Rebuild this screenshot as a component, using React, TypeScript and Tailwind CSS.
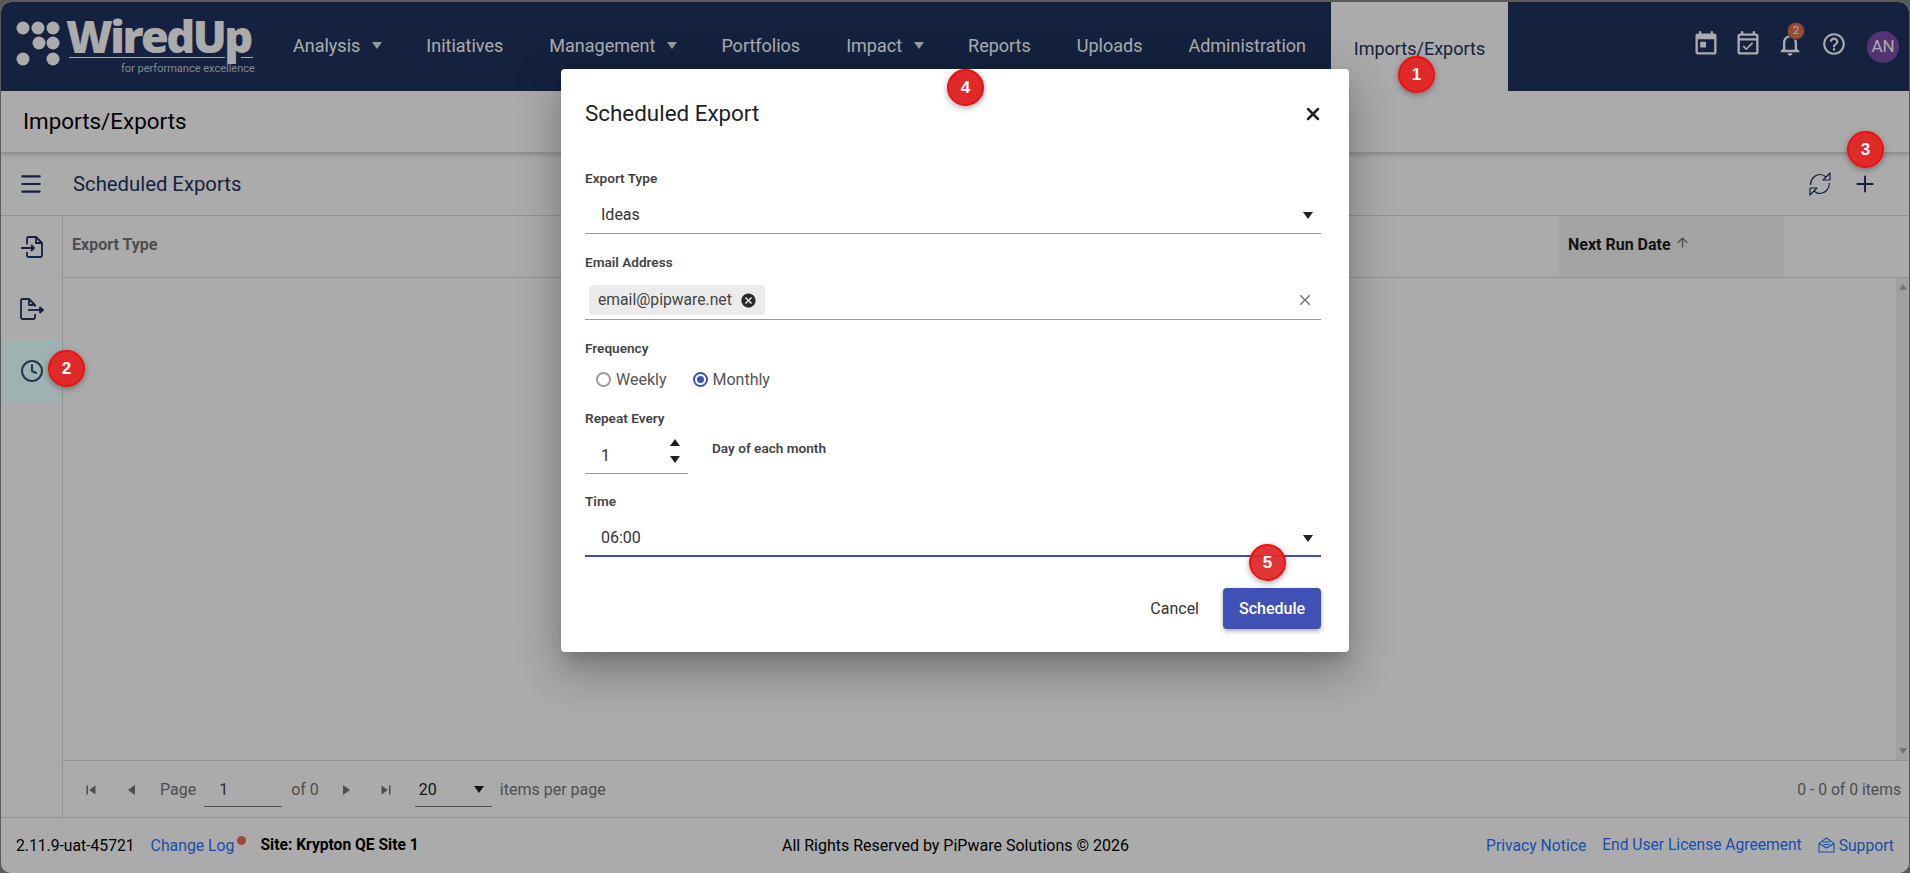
import { Clock, Menu, Plus, ArrowUp, X } from "lucide-react";
import {
  MdToday,
  MdOutlineEventAvailable,
  MdOutlineNotifications,
  MdHelpOutline,
  MdClose,
  MdCancel,
  MdSkipPrevious,
  MdSkipNext,
} from "react-icons/md";

const navItems = [
  { label: "Analysis", caret: true },
  { label: "Initiatives" },
  { label: "Management", caret: true },
  { label: "Portfolios" },
  { label: "Impact", caret: true },
  { label: "Reports" },
  { label: "Uploads" },
  { label: "Administration" },
];

function Tri({ dir = "down", className = "" }: { dir?: "down" | "up" | "left" | "right"; className?: string }) {
  const points = {
    down: "0,0 10,0 5,7",
    up: "0,7 10,7 5,0",
    left: "8,0 8,10 1,5",
    right: "1,0 1,10 8,5",
  }[dir];
  const box = dir === "left" || dir === "right" ? "0 0 9 10" : "0 0 10 7";
  return (
    <svg viewBox={box} className={className} fill="currentColor">
      <polygon points={points} />
    </svg>
  );
}

function ImportIcon() {
  return (
    <svg viewBox="0 0 24 24" className="size-[24px]" fill="none" stroke="currentColor" strokeWidth="1.8" strokeLinejoin="round">
      <path d="M7 9.5V3.5A1.5 1.5 0 0 1 8.5 2H16L22 8V20.5A1.5 1.5 0 0 1 20.5 22H8.5A1.5 1.5 0 0 1 7 20.5V17" />
      <path d="M16 2V8H22" />
      <path d="M1 13H14M11 10l3 3-3 3" />
    </svg>
  );
}

function ExportIcon() {
  return (
    <svg viewBox="0 0 24 24" className="size-[24px]" fill="none" stroke="currentColor" strokeWidth="1.8" strokeLinejoin="round">
      <path d="M15 9.5V8L9 2H2.5A1.5 1.5 0 0 0 1 3.5V20.5A1.5 1.5 0 0 0 2.5 22H13.5A1.5 1.5 0 0 0 15 20.5V17" />
      <path d="M9 2V8H15" />
      <path d="M8 13H20" />
      <path d="M20 10.5 23 13 20 15.5Z" fill="currentColor" />
    </svg>
  );
}

function SyncIcon() {
  return (
    <svg viewBox="0 0 24 24" className="size-[24px]" fill="none" stroke="currentColor" strokeWidth="1.2" strokeLinejoin="round">
      <path d="M2.5 13C2.5 7 7 2.5 12 2.5c2.5 0 4.5 1 6 2.5" />
      <path d="M22 1v7h-7z" />
      <path d="M21.5 11c0 6-4.5 10.5-9.5 10.5-2.5 0-4.5-1-6-2.5" />
      <path d="M2 23v-7h7z" />
    </svg>
  );
}

function Logo() {
  const dots = [
    [22, 28],
    [37, 28],
    [52, 28],
    [38, 43],
    [52, 43],
    [22, 59],
    [52, 59],
  ];
  return (
    <div className="relative w-[270px] h-full shrink-0">
      <svg className="absolute left-0 top-0" width="68" height="89" viewBox="0 0 68 89">
        {dots.map(([x, y]) => (
          <circle key={`${x}-${y}`} cx={x} cy={y - 2} r="6.5" fill="#ffffff" />
        ))}
      </svg>
      <span className="absolute left-[65px] top-[11px] text-[45px] leading-[46px] font-black text-white tracking-[-2.5px] [font-family:'Open_Sans',sans-serif]">
        WiredUp
      </span>
      <div className="absolute left-[68px] top-[55px] w-[156px] h-px bg-white" />
      <div className="absolute left-[240px] top-[55px] w-[12px] h-px bg-white" />
      <span className="absolute left-[120px] top-[59px] text-[11px] leading-[16px] text-[#c3c8d2]">
        for performance excellence
      </span>
    </div>
  );
}

function Field({ label, children }: { label: string; children: React.ReactNode }) {
  return (
    <div>
      <div className="h-5 flex items-center text-[13.6px] font-semibold text-[#444444]">{label}</div>
      {children}
    </div>
  );
}

function Radio({ label, checked = false }: { label: string; checked?: boolean }) {
  return (
    <div className="flex items-center gap-[5px]">
      <span
        className={
          checked
            ? "size-[15px] rounded-full border-2 border-[#3f51b5] flex items-center justify-center"
            : "size-[15px] rounded-full border-2 border-[#9a9a9a]"
        }
      >
        {checked && <span className="size-[7px] rounded-full bg-[#3f51b5]" />}
      </span>
      <span className="text-[16px] text-[#555555]">{label}</span>
    </div>
  );
}

function Badge({ n, className }: { n: number; className: string }) {
  return (
    <div
      className={
        "absolute size-[37px] rounded-full bg-[#e02a2a] border-2 border-[#f00f0f] flex items-center justify-center text-white text-[17px] font-bold shadow-[0_2px_6px_rgba(0,0,0,0.35)] [font-family:'Liberation_Sans',sans-serif] " +
        className
      }
    >
      {n}
    </div>
  );
}

function Dialog() {
  return (
    <div className="w-[788px] h-[583px] bg-white rounded-[4px] px-[24px] pr-[28px] shadow-[0_11px_15px_-7px_rgba(0,0,0,0.2),0_24px_38px_3px_rgba(0,0,0,0.14),0_9px_46px_8px_rgba(0,0,0,0.12)]">
      <div className="h-[88px] pt-[1px] flex items-center justify-between text-[#222222]">
        <span className="text-[22.4px]">Scheduled Export</span>
        <X className="size-[20px] -mr-[2px]" strokeWidth={3} />
      </div>
      <div className="pt-[11px] flex flex-col">
        <Field label="Export Type">
          <div className="h-[46px] pt-[9px] border-b border-[#9a9a9a] flex items-center justify-between pl-[16px] pr-[8px] text-[16px] text-[#333333]">
            <span>Ideas</span>
            <Tri className="w-[10px] h-[7px] text-[#222222]" />
          </div>
        </Field>
        <div className="mt-[18px]">
          <Field label="Email Address">
            <div className="h-[48px] pt-[13px] border-b border-[#9a9a9a] flex items-start justify-between pl-[4px] pr-[7px]">
              <div className="h-[30px] w-[176px] rounded-[4px] bg-[#ebebeb] flex items-center pl-[9px] gap-[8px] text-[15.7px] text-[#444444]">
                <span>email@pipware.net</span>
                <MdCancel className="size-[17px] text-[#2a2a2a]" />
              </div>
              <MdClose className="size-[18px] mt-[6px] text-[#777777]" />
            </div>
          </Field>
        </div>
        <div className="mt-[18px]">
          <Field label="Frequency">
            <div className="h-[42px] pt-[1px] flex items-center gap-[26px] pl-[11px]">
              <Radio label="Weekly" />
              <Radio label="Monthly" checked />
            </div>
          </Field>
        </div>
        <div className="mt-[8px]">
          <Field label="Repeat Every">
            <div className="flex items-start gap-[24px]">
              <div className="w-[103px] h-[46px] pt-[11px] border-b border-[#9a9a9a] flex items-center justify-between pl-[16px] pr-[8px] text-[16px] text-[#333333]">
                <span>1</span>
                <div className="flex flex-col gap-[10px] -mt-[10px]">
                  <Tri dir="up" className="w-[10px] h-[7px] text-[#222222]" />
                  <Tri className="w-[10px] h-[7px] text-[#222222]" />
                </div>
              </div>
              <div className="h-5 mt-[10px] flex items-center text-[13.6px] font-semibold text-[#444444]">
                Day of each month
              </div>
            </div>
          </Field>
        </div>
        <div className="mt-[17px]">
          <Field label="Time">
            <div className="h-[46px] pt-[10px] border-b-2 border-[#3f51b5] flex items-center justify-between pl-[16px] pr-[8px] text-[16px] text-[#333333]">
              <span>06:00</span>
              <Tri className="w-[10px] h-[7px] text-[#222222]" />
            </div>
          </Field>
        </div>
        <div className="mt-[31px] flex items-center justify-end gap-[24px]">
          <span className="text-[16px] text-[#333333]">Cancel</span>
          <div className="w-[98px] h-[41px] rounded-[4px] bg-[#3f51b5] text-white text-[16px] font-medium flex items-center justify-center shadow-[0_2px_4px_rgba(0,0,0,0.35)]">
            Schedule
          </div>
        </div>
      </div>
    </div>
  );
}

export default function App() {
  return (
    <div className="relative w-[1910px] h-[873px] overflow-hidden bg-[#5a5a5a] pt-[2px] px-px [font-family:Roboto,sans-serif]">
      <div className="relative h-[871px] rounded-t-[10px] rounded-b-[10px] overflow-hidden bg-white flex flex-col">
        <header className="h-[89px] shrink-0 bg-[#1e345e] flex items-stretch">
          <Logo />
          <nav className="flex items-stretch pb-[2px] -ml-[1px]">
            {navItems.map((item) => (
              <div key={item.label} className="flex items-center px-[23px] text-[18px] text-white">
                <span>{item.label}</span>
                {item.caret && <Tri className="w-[10px] h-[7px] ml-[12px] -mr-[2px] text-[#e6e6e6]" />}
              </div>
            ))}
          </nav>
          <div className="w-[177px] ml-[2px] bg-white flex justify-center pt-[33px] text-[18px] text-[#1e345e]">
            Imports/Exports
          </div>
          <div className="flex-1 relative flex items-start justify-end text-white pt-[28px] pr-[10px]">
            <MdToday className="size-[28px] mr-[14px]" />
            <MdOutlineEventAvailable className="size-[28px] mr-[14px]" />
            <div className="relative mr-[17px]">
              <MdOutlineNotifications className="size-[28px]" />
              <span className="absolute -top-[8px] left-[11px] size-[18px] rounded-full bg-[#e8704a] border border-[#3b4a86] text-[11px] leading-[16px] text-center text-white">
                2
              </span>
            </div>
            <MdHelpOutline className="size-[26px] mr-[20px] mt-[1px]" />
            <div className="size-[32px] mt-[1px] rounded-full bg-[#7c4dac] flex items-center justify-center text-[17px]">
              AN
            </div>
          </div>
        </header>

        <div className="h-[62px] shrink-0 flex items-center pl-[22px] text-[22.4px] text-black border-b border-[#d8d8d8] shadow-[0_2px_4px_rgba(0,0,0,0.18)] relative">
          Imports/Exports
        </div>

        <div className="h-[63px] shrink-0 flex items-center justify-between border-b border-[#dcdcdc] text-[#1e345e]">
          <div className="flex items-center">
            <Menu className="size-[26px] ml-[17px]" strokeWidth={2} />
            <span className="ml-[29px] text-[20.3px]">Scheduled Exports</span>
          </div>
          <div className="flex items-center gap-[20px] pr-[31px]">
            <SyncIcon />
            <Plus className="size-[26px]" strokeWidth={1.8} />
          </div>
        </div>

        <div className="flex-1 flex min-h-0">
          <aside className="w-[62px] shrink-0 border-r border-[#dcdcdc] flex flex-col text-[#1e345e]">
            <div className="h-[62px] flex items-center justify-center">
              <ImportIcon />
            </div>
            <div className="h-[62px] flex items-center justify-center">
              <ExportIcon />
            </div>
            <div className="h-[62px] flex items-center justify-center bg-[#f4ffff]">
              <Clock className="size-[24px]" strokeWidth={2} />
            </div>
          </aside>

          <main className="flex-1 min-w-0 flex flex-col">
            <div className="h-[62px] shrink-0 border-b border-[#dcdcdc] flex text-[16px] font-bold">
              <div className="w-[1496px] pl-[9px] pt-[17px] text-[#757575]">Export Type</div>
              <div className="w-[225px] pl-[9px] pt-[17px] bg-[#f4f4f4] text-[#1c1c1c] flex items-start gap-[4px]">
                <span>Next Run Date</span>
                <ArrowUp className="size-[15px] mt-[2px] text-[#757575]" strokeWidth={2.2} />
              </div>
            </div>
            <div className="flex-1 flex justify-end min-h-0">
              <div className="w-[13px] bg-[#f1f1f1] flex flex-col items-center justify-between py-[6px] text-[#a8a8a8]">
                <Tri dir="up" className="w-[8px] h-[6px]" />
                <Tri className="w-[8px] h-[6px]" />
              </div>
            </div>
            <div className="h-[57px] shrink-0 border-t border-[#dcdcdc] flex items-center pt-[2px] text-[16px] text-[#757575]">
              <MdSkipPrevious className="size-[18px] ml-[19px]" />
              <Tri dir="left" className="w-[9px] h-[10px] ml-[27px]" />
              <span className="ml-[24px]">Page</span>
              <div className="ml-[8px] w-[78px] h-[34px] pl-[15px] flex items-center border-b border-[#757575] text-[#444444]">
                1
              </div>
              <span className="ml-[9px]">of 0</span>
              <Tri dir="right" className="w-[9px] h-[10px] ml-[23px]" />
              <MdSkipNext className="size-[18px] ml-[26px]" />
              <div className="ml-[20px] w-[77px] h-[34px] pl-[4px] pr-[8px] flex items-center justify-between border-b border-[#757575] text-[#222222]">
                <span>20</span>
                <Tri className="w-[10px] h-[7px]" />
              </div>
              <span className="ml-[8px]">items per page</span>
              <span className="ml-auto mr-[8px] text-[15.7px]">0 - 0 of 0 items</span>
            </div>
          </main>
        </div>

        <footer className="h-[56px] shrink-0 border-t border-[#dcdcdc] grid grid-cols-[1fr_auto_1fr] items-center text-[16px]">
          <div className="flex items-center">
            <span className="ml-[15px] text-black text-[15.7px]">2.11.9-uat-45721</span>
            <span className="ml-[16px] text-[#2a75fc] text-[15.8px]">Change Log</span>
            <span className="ml-[3px] mb-[10px] size-[9px] rounded-full bg-[#f26d4f]" />
            <span className="ml-[14px] font-bold text-black text-[15.6px]">Site: Krypton QE Site 1</span>
          </div>
          <span className="text-black pl-[1px]">All Rights Reserved by PiPware Solutions © 2026</span>
          <div className="flex items-center justify-end gap-[16px] pr-[15px] text-[#2a75fc] text-[15.7px]">
            <span>Privacy Notice</span>
            <span className="text-[15.6px]">End User License Agreement</span>
            <span className="flex items-center gap-[4px]">
              <svg viewBox="0 0 17 16" className="w-[17px] h-[16px]" fill="none" stroke="currentColor" strokeWidth="1.1">
                <path d="M1 6.5 8.5 1 16 6.5V15H1Z" />
                <path d="M1 6.5 8.5 11 16 6.5" />
                <path d="M5 5h7M5.5 7.5h6" />
              </svg>
              Support
            </span>
          </div>
        </footer>

        <div className="absolute inset-0 bg-black/33 flex justify-center pt-[67px]">
          <Dialog />
        </div>
        {/* active side item tint, brighter than the dimmed white so it sits above the backdrop */}
        <div className="absolute left-0 top-[338px] w-[61px] h-[62px] bg-[#80e8e8]/12" />
      </div>

      <Badge n={1} className="left-[1398px] top-[56px]" />
      <Badge n={2} className="left-[48px] top-[350px]" />
      <Badge n={3} className="left-[1847px] top-[131px]" />
      <Badge n={4} className="left-[947px] top-[69px]" />
      <Badge n={5} className="left-[1249px] top-[544px] bg-[#e02a2a]/95" />
    </div>
  );
}
